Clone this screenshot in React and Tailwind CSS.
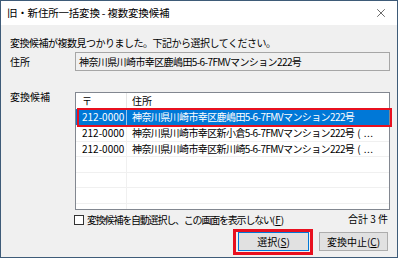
import { X } from 'lucide-react'

const FONT = { fontFamily: '"Noto Sans CJK JP", "Noto Sans", sans-serif' }

const rows = [
  { zip: '212-0000', addr: '神奈川県川崎市幸区鹿嶋田5-6-7FMVマンション222号', selected: true },
  { zip: '212-0000', addr: '神奈川県川崎市幸区新小倉5-6-7FMVマンション222号', more: true },
  { zip: '212-0000', addr: '神奈川県川崎市幸区新川崎5-6-7FMVマンション222号', more: true },
  { zip: '', addr: '' },
  { zip: '', addr: '' },
  { zip: '', addr: '' },
]

function Row({ r, first }) {
  const h = first ? 'h-[17px]' : 'h-[15.5px]'
  return (
    <div className={`flex ${h} border-b border-[#f0f0f0] ${r.selected ? 'bg-[#0078d7] text-white' : 'text-black'}`}>
      <div className={`w-[51px] shrink-0 pl-[6px] flex items-center border-r ${r.selected ? 'border-[#9cc6ec]' : 'border-[#f0f0f0]'}`}>
        {r.zip}
      </div>
      <div className="flex-1 min-w-0 pl-[5px] flex items-center whitespace-nowrap">
        <span className="tracking-[-0.6px]">{r.addr}</span>
        {r.more && (
          <span className="ml-[3px] flex items-center gap-[3px]">
            <span>(</span>
            <span className="tracking-[0.5px]">...</span>
          </span>
        )}
      </div>
    </div>
  )
}

export default function App() {
  return (
    <div className="w-[398px] h-[258px] border border-[#3e5b78] flex flex-col text-[10px] leading-[14px] relative" style={FONT}>
      <div className="h-[24px] bg-white flex items-center justify-between pl-[6px] pr-[9px] shrink-0">
        <div className="text-black tracking-[-0.2px] text-[10.5px]">旧・新住所一括変換 - 複数変換候補</div>
        <X size={14} strokeWidth={1} className="text-black" />
      </div>

      <div className="flex-1 bg-[#f0f0f0] pl-[9px] pr-[7px]">
        <div className="mt-[11px] tracking-[-0.5px]">変換候補が複数見つかりました。下記から選択してください。</div>

        <div className="flex items-center mt-[2px]">
          <div className="w-[65px] shrink-0 pt-[1px]">住所</div>
          <div className="flex-1 h-[19px] border border-[#a6a6a6] bg-[#f0f0f0] flex items-center pl-[3px] tracking-[-0.6px] whitespace-nowrap">
            神奈川県川崎市幸区鹿嶋田5-6-7FMVマンション222号
          </div>
        </div>

        <div className="flex mt-[21px]">
          <div className="w-[65px] shrink-0 -mt-[2px]">変換候補</div>
          <div className="flex-1 min-w-0 h-[118px] border border-[#828790] bg-white overflow-hidden">
            <div className="flex h-[16px]">
              <div className="w-[51px] shrink-0 pl-[6px] flex items-center border-r border-[#e5e5e5]">〒</div>
              <div className="flex-1 pl-[5px] flex items-center">住所</div>
            </div>
            {rows.map((r, i) => (
              <Row key={i} r={r} first={i === 0} />
            ))}
            <div className="flex h-[20px]">
              <div className="w-[51px] shrink-0 border-r border-[#f0f0f0]" />
            </div>
          </div>
        </div>

        <div className="flex items-center justify-between ml-[64px] mt-[4px] h-[12px]">
          <div className="flex items-center">
            <div className="w-[10px] h-[10px] border border-[#333] bg-white mr-[3px]" />
            <span className="tracking-[-1.2px]">変換候補を自動選択し、この画面を表示しない</span>
            <span>(<span className="underline">F</span>)</span>
          </div>
          <div className="pr-[2px] -mt-[3px]">合計 3 件</div>
        </div>

        <div className="flex justify-end gap-[10px] mt-[6px] pr-[2px]">
          <button className="w-[71px] h-[19px] border border-[#0078d7] bg-[#e1e1e1] flex items-center justify-center text-[10px]">
            選択(<span className="underline">S</span>)
          </button>
          <button className="w-[69px] h-[19px] border border-[#adadad] bg-[#e1e1e1] flex items-center justify-center text-[10px]">
            変換中止(<span className="underline">C</span>)
          </button>
        </div>
      </div>

      <div className="absolute left-[76px] top-[107px] w-[315px] h-[19px] border-2 border-[#e8101f] pointer-events-none" />
      <div className="absolute left-[232px] top-[228px] w-[80px] h-[26px] border-[3px] border-[#e8101f] pointer-events-none" />
    </div>
  )
}
